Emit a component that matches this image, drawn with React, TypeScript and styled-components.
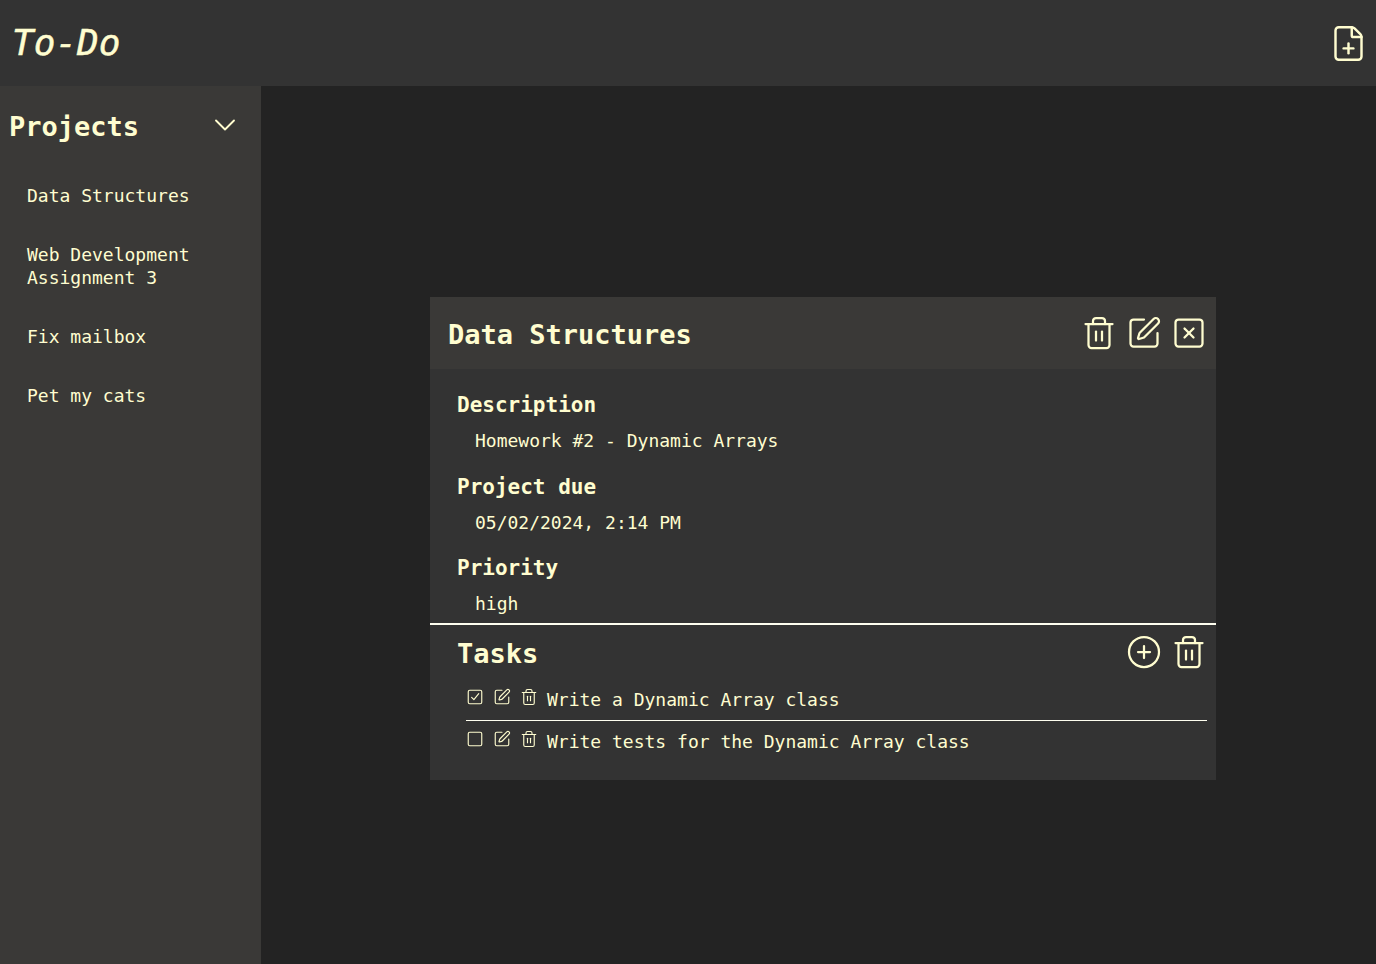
import { ChevronDown, CirclePlus, FilePlus, Square, SquarePen, SquareX, Trash2 } from 'lucide-react'
import styled, { createGlobalStyle } from 'styled-components'

const cream = '#fffdd0'

const GlobalStyle = createGlobalStyle`
  * {
    box-sizing: border-box;
  }
  body {
    margin: 0;
    background-color: #232323;
    color: ${cream};
    font-family: 'DejaVu Sans Mono', 'Liberation Mono', monospace;
    font-size: 18px;
  }
`

const Page = styled.div`
  display: grid;
  grid-template-columns: 261px 1fr;
  grid-template-rows: 86px 1fr;
  height: 964px;
  overflow: hidden;
`

const Header = styled.header`
  grid-column: 1 / 3;
  display: flex;
  align-items: center;
  justify-content: space-between;
  padding: 0 8px 0 12px;
  background-color: #333333;
`

const Logo = styled.h1`
  margin: 0;
  font-size: 36px;
  font-weight: 400;
  font-style: italic;
  line-height: 1;
  -webkit-text-stroke: 0.5px ${cream};
`

const Sidebar = styled.aside`
  background-color: #3a3937;
  padding: 21px 0 0 9px;
`

const SidebarHead = styled.div`
  display: flex;
  align-items: center;
  justify-content: space-between;
  padding-right: 18px;
  height: 36px;
  margin-bottom: 41px;
`

const Heading = styled.h2`
  margin: 4px 0 0;
  font-size: 27px;
  font-weight: 700;
  line-height: 36px;
`

const ProjectList = styled.ul`
  list-style: none;
  margin: 0;
  padding: 0 0 0 18px;
  display: flex;
  flex-direction: column;
  gap: 36px;
`

const ProjectItem = styled.li`
  line-height: 23px;
`

const Main = styled.main`
  padding: 211px 0 0 169px;
`

const Card = styled.section`
  width: 786px;
  height: 483px;
  background-color: #333333;
`

const CardHead = styled.div`
  display: flex;
  align-items: center;
  justify-content: space-between;
  height: 72px;
  padding: 0 9px 0 18px;
  background-color: #3a3937;
`

const IconRow = styled.div`
  display: flex;
  align-items: center;
  gap: 9px;
`

const Details = styled.div`
  padding: 18px 27px 0;
  height: 256px;
  border-bottom: 2px solid #fffff0;
`

const SubHeading = styled.h3`
  margin: 0;
  font-size: 21px;
  font-weight: 700;
  line-height: 36px;
`

const DetailText = styled.p`
  margin: 0 0 10.5px 18px;
  line-height: 35px;
`

const TasksHead = styled.div`
  display: flex;
  align-items: center;
  justify-content: space-between;
  height: 54px;
  padding: 0 9px 0 27px;
`

const TaskList = styled.ul`
  list-style: none;
  margin: 0;
  padding: 0 9px 0 36px;
`

const TaskRow = styled.li<{ $divider?: boolean }>`
  display: flex;
  align-items: center;
  gap: 9px;
  height: 42px;
  border-bottom: 1px solid ${(p) => (p.$divider ? '#fffff0' : 'transparent')};
`

const TaskIcons = styled.div`
  display: flex;
  gap: 9px;
  margin-bottom: 6px;
`

const CheckedBox = () => (
  <svg width={18} height={18} viewBox="0 0 24 24" fill="none" stroke="currentColor" strokeWidth={1.5} strokeLinecap="round" strokeLinejoin="round">
    <rect x={3} y={3} width={18} height={18} rx={2} />
    <path d="M7.5 12.5 10.5 15.5 17 7.5" />
  </svg>
)

const tasks = [
  { name: 'Write a Dynamic Array class', done: true },
  { name: 'Write tests for the Dynamic Array class', done: false },
]

export default function App() {
  return (
    <Page>
      <GlobalStyle />
      <Header>
        <Logo>To-Do</Logo>
        <FilePlus size={39} strokeWidth={1.5} />
      </Header>
      <Sidebar>
        <SidebarHead>
          <Heading>Projects</Heading>
          <ChevronDown size={36} strokeWidth={1.25} />
        </SidebarHead>
        <ProjectList>
          <ProjectItem>Data Structures</ProjectItem>
          <ProjectItem>
            Web Development
            <br />
            Assignment 3
          </ProjectItem>
          <ProjectItem>Fix mailbox</ProjectItem>
          <ProjectItem>Pet my cats</ProjectItem>
        </ProjectList>
      </Sidebar>
      <Main>
        <Card>
          <CardHead>
            <Heading>Data Structures</Heading>
            <IconRow>
              <Trash2 size={36} strokeWidth={1.5} />
              <SquarePen size={36} strokeWidth={1.5} />
              <SquareX size={36} strokeWidth={1.5} />
            </IconRow>
          </CardHead>
          <Details>
            <SubHeading>Description</SubHeading>
            <DetailText>Homework #2 - Dynamic Arrays</DetailText>
            <SubHeading>Project due</SubHeading>
            <DetailText>05/02/2024, 2:14 PM</DetailText>
            <SubHeading>Priority</SubHeading>
            <DetailText>high</DetailText>
          </Details>
          <TasksHead>
            <Heading>Tasks</Heading>
            <IconRow>
              <CirclePlus size={36} strokeWidth={1.5} />
              <Trash2 size={36} strokeWidth={1.5} />
            </IconRow>
          </TasksHead>
          <TaskList>
            {tasks.map((task, i) => (
              <TaskRow key={task.name} $divider={i < tasks.length - 1}>
                <TaskIcons>
                  {task.done ? <CheckedBox /> : <Square size={18} strokeWidth={1.5} />}
                  <SquarePen size={18} strokeWidth={1.5} />
                  <Trash2 size={18} strokeWidth={1.5} />
                </TaskIcons>
                <span>{task.name}</span>
              </TaskRow>
            ))}
          </TaskList>
        </Card>
      </Main>
    </Page>
  )
}
